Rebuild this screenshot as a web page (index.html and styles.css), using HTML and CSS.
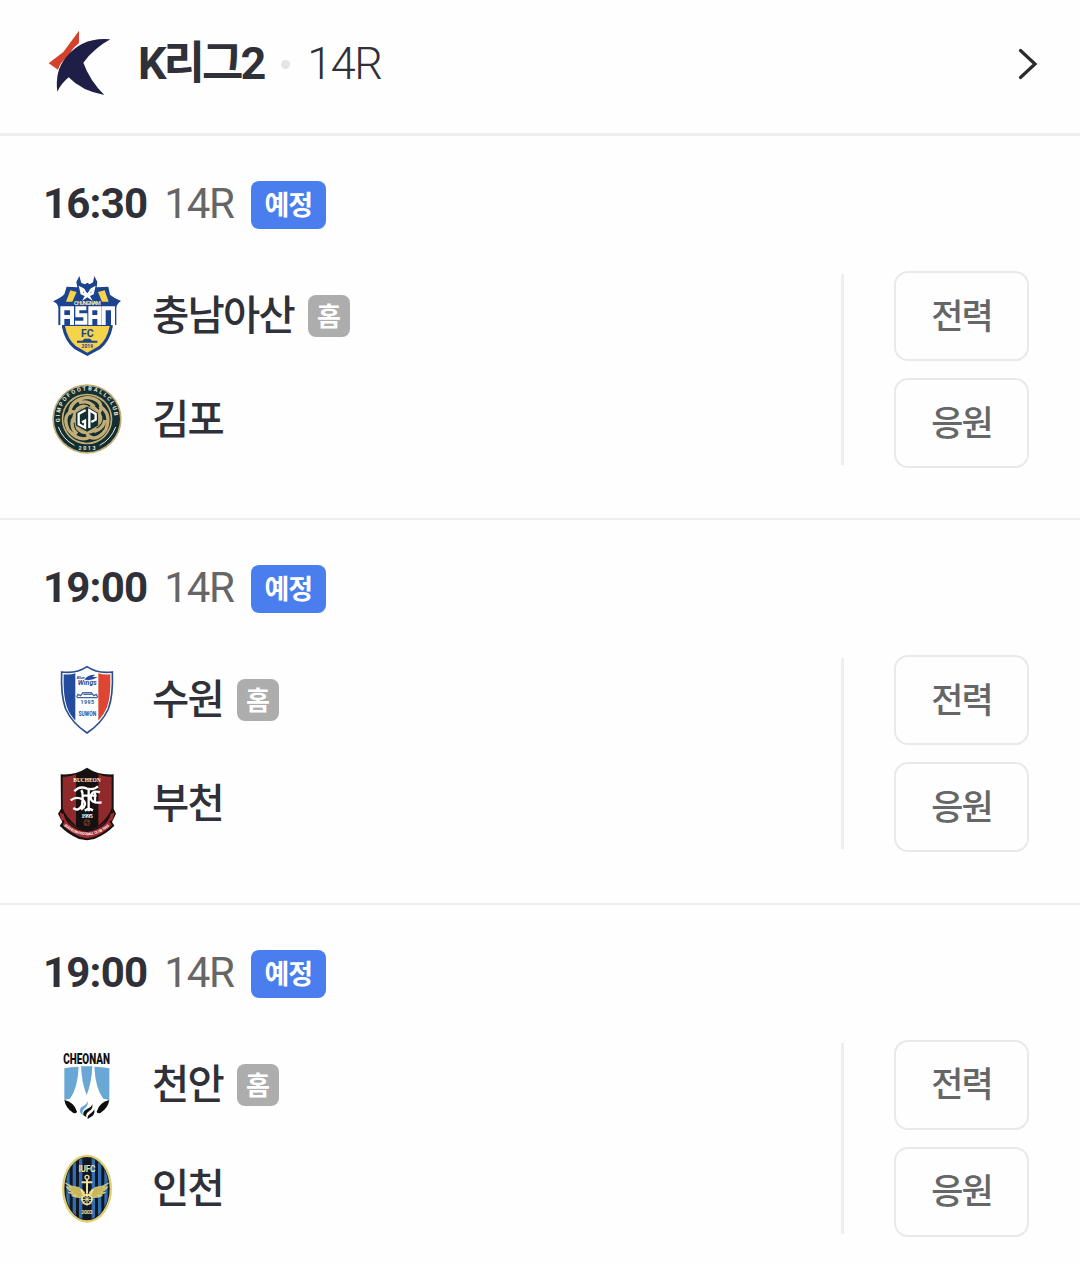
FILE: index.html
```html
<!doctype html>
<html lang="ko">
  <head>
    <meta charset="UTF-8" />
    <meta name="viewport" content="width=device-width, initial-scale=1.0" />
    <title>K리그2 14R</title>
    <link rel="stylesheet" href="styles.css">
  </head>
  <body>

    <header class="league-header">
      <svg class="league-logo" viewBox="-2 -2 192 201">
        <path fill="#d5422c" d="M91 0V37L74 53L56 79Q35 94 28 117L0 98L44 64Z"/>
        <path fill="#1e1e46" d="M185 26Q137 52 104 96Q123 149 167 193Q99 181 60 140Q38 158 26 183Q18 121 51 81Q101 18 185 26Z"/>
      </svg>
      <h1 class="league-name">K리그2</h1>
      <span class="dot"></span>
      <span class="league-round">14R</span>
      <svg class="arrow" viewBox="0 0 20 32">
        <path d="M2.500 2.500L17 16L2.500 29.500"/>
      </svg>
    </header>

    <section class="match">
      <div class="match-status">
        <strong class="time">16:30</strong>
        <span class="round">14R</span>
        <span class="badge">예정</span>
      </div>
      <div class="match-body">
        <div class="teams">
          <div class="team">
            <!-- Chungnam Asan -->
            <svg class="crest" viewBox="0 -12 264 312">
              <path fill="#1c438f" d="M106 24L112 45L123 49L130 44L137 49L147 43L151 24L160 42L158 58L193 56L198 80Q210 90 231 99Q218 108 217 119V171H206V178Q198 219 169 243L130 264L91 243Q62 219 54 178V171H43V119Q41 106 27 100Q51 90 61 79L68 56L100 58L97 42Z"/>
              <path fill="#f5d34b" d="M79 67L98 72L85 101H66ZM182 67L162 72L174 101H194Z"/>
              <path fill="#f5d34b" d="M63 174H197Q190 213 165 234L130 254L95 234Q70 213 63 174Z"/>
              <path fill="#fff" d="M104 53L119 61L130 72L141 61L155 53L149 79L138 84L146 99L130 88L114 99L122 84L110 79Z"/>
              <path fill="#1c438f" d="M124 54L130 61L136 54V68L130 76L124 68ZM117 70L121 74L119 76ZM143 70L139 74L141 76Z"/>
              <text x="130" y="112" class="crest-text" fill="#f3e8b0" font-size="17" textLength="80">CHUNGNAM</text>
              <path fill="none" stroke="#fff" stroke-width="12" d="M55 171V121H84V171M55 147H84M127 121H100V142H124V164H93M139 171V121H166V171M139 147H166M179 171V121H207V171"/>
              <text x="130" y="206" class="crest-text" fill="#1c438f" font-size="33" textLength="38" lengthAdjust="spacingAndGlyphs">FC</text>
              <path fill="#1c438f" d="M99 218H115L121 212H138L144 218H160V224H99Z"/>
              <text x="130" y="241" class="crest-text" fill="#1c438f" font-size="15">2019</text>
            </svg>
            <span class="team-name">충남아산</span>
            <span class="home">홈</span>
          </div>
          <div class="team">
            <!-- Gimpo -->
            <svg class="crest" viewBox="0 -30 264 312">
              <circle cx="129" cy="123" r="104" fill="#c3ad76"/>
              <circle cx="129" cy="123" r="99" fill="#142f32"/>
              <circle cx="129" cy="123" r="76" fill="#c3ad76"/>
              <circle cx="129" cy="123" r="71" fill="#142f32"/>
              <g fill="none" stroke="#c3ad76" stroke-width="10">
                <path id="knot" d="M77 110Q76 66 129 58Q171 62 172 91Q164 117 136 92Q119 78 103 91Q89 104 88 134M105 75Q130 65 151 86"/>
                <use href="#knot" transform="rotate(120 129 123)"/>
                <use href="#knot" transform="rotate(240 129 123)"/>
              </g>
              <path fill="#142f32" stroke="#c3ad76" stroke-width="3" d="M129 84L164 104V143L129 163L94 143V104Z"/>
              <path fill="none" stroke="#fff" stroke-width="7" d="M125 96L104 108V139L123 149V128L114 133M136 150V97L155 108V125L142 132"/>
              <path id="gimpo-ring" fill="none" d="M48 132A82 82 0 1 1 210 132"/>
              <text fill="#eee9d7" font-family="Roboto, sans-serif" font-weight="700" font-size="17" textLength="264"><textPath href="#gimpo-ring">GIMPOFOOTBALLCLUB</textPath></text>
              <text x="129" y="215" class="crest-text" fill="#eee9d7" font-size="16" textLength="51">2013</text>
              <path fill="none" stroke="#eee9d7" stroke-width="3" d="M43 147Q57 184 91 202M215 147Q201 184 167 202"/>
            </svg>
            <span class="team-name">김포</span>
          </div>
        </div>
        <div class="actions">
          <button class="action">전력</button>
          <button class="action">응원</button>
        </div>
      </div>
    </section>

    <section class="match">
      <div class="match-status">
        <strong class="time">19:00</strong>
        <span class="round">14R</span>
        <span class="badge">예정</span>
      </div>
      <div class="match-body">
        <div class="teams">
          <div class="team">
            <!-- Suwon -->
            <svg class="crest" viewBox="0 -30 264 312">
              <path fill="#fff" stroke="#2a4e92" stroke-width="5" d="M53 42Q97 48 129 26Q161 48 205 42Q208 112 193 153Q173 196 129 225Q85 196 65 153Q50 112 53 42Z"/>
              <path fill="#244c9d" d="M59 49Q79 51 94 46V188Q76 169 69 148Q57 115 59 49Z"/>
              <path fill="#df4632" d="M163 46Q179 51 199 49Q201 115 189 148Q181 169 163 188Z"/>
              <path fill="#244c9d" d="M122 64Q129 50 154 50L145 57L161 57L148 64L131 67Z"/>
              <text x="110" y="64" class="crest-text" fill="#244c9d" font-size="13" font-style="italic" textLength="24">Blue</text>
              <text x="130" y="82" class="crest-text" fill="#244c9d" font-size="20" font-style="italic" textLength="57" lengthAdjust="spacingAndGlyphs">Wings</text>
              <path fill="none" stroke="#45679d" stroke-width="4" d="M98 117L102 109L110 113L117 104H142L149 113L157 109L161 117M98 119H161M118 109H143"/>
              <text x="130" y="139" class="crest-text" fill="#31558f" font-size="16" textLength="41">1995</text>
              <text x="130" y="175" class="crest-text" fill="#244c9d" font-size="19" textLength="53" lengthAdjust="spacingAndGlyphs">SUWON</text>
            </svg>
            <span class="team-name">수원</span>
            <span class="home">홈</span>
          </div>
          <div class="team">
            <!-- Bucheon -->
            <svg class="crest" viewBox="0 -24 264 312">
              <path fill="#171011" d="M50 43Q95 46 129 23Q163 46 209 43V146L216 161L204 186L211 197Q187 222 151 237L129 241L105 237Q71 222 47 197L55 186L42 161L51 146Z"/>
              <path fill="#90292b" d="M56 50Q76 52 96 43V197Q66 172 56 145ZM163 43Q182 52 203 50V145Q194 172 163 197Z"/>
              <path fill="#a52b30" d="M47 157L60 163L72 183Q98 208 129 213Q160 208 187 183L199 163L212 157L205 180L196 184L204 196Q176 222 149 231L129 235L110 231Q82 221 56 196L62 183L51 179Z"/>
              <path fill="none" stroke="#171011" stroke-width="4" d="M61 163Q71 204 129 214Q187 204 198 163"/>
              <text x="129" y="65" class="crest-text blackletter" fill="#fff" font-size="20" textLength="82" lengthAdjust="spacingAndGlyphs">BUCHEON</text>
              <path fill="none" stroke="#fff" stroke-width="7" d="M91 94Q107 76 129 86Q149 91 162 79M112 90Q119 101 114 136Q103 156 88 144M80 121Q96 108 115 118Q133 132 111 149M134 88V154M118 107H158M168 97Q146 90 140 108Q137 132 173 127M122 152L134 145L147 151M153 97V129"/>
              <text x="129" y="175" class="crest-text blackletter" fill="#fff" font-size="20" textLength="35">1995</text>
              <circle cx="129" cy="188" r="10" fill="#6c3927"/>
              <path fill="none" stroke="#171011" stroke-width="2" d="M119 188H139M129 178V198M122 181L136 195"/>
              <path id="bucheon-ribbon" fill="none" d="M60 197Q129 255 201 195"/>
              <text fill="#fff" font-family="Roboto, sans-serif" font-weight="700" font-size="11" textLength="150"><textPath href="#bucheon-ribbon">BUCHEON FOOTBALL CLUB 1995</textPath></text>
            </svg>
            <span class="team-name">부천</span>
          </div>
        </div>
        <div class="actions">
          <button class="action">전력</button>
          <button class="action">응원</button>
        </div>
      </div>
    </section>

    <section class="match">
      <div class="match-status">
        <strong class="time">19:00</strong>
        <span class="round">14R</span>
        <span class="badge">예정</span>
      </div>
      <div class="match-body">
        <div class="teams">
          <div class="team">
            <!-- Cheonan -->
            <svg class="crest" viewBox="0 -27 264 312">
              <text x="128" y="65" class="crest-text cheonan-text" fill="#111" font-size="43" textLength="140" lengthAdjust="spacingAndGlyphs">CHEONAN</text>
              <path fill="#69a8d5" d="M61 79Q80 74 104 74Q101 139 78 170L61 174ZM111 73H145Q143 123 128 159Q113 123 111 73ZM151 74Q177 74 196 79V174L178 170Q154 139 151 74Z"/>
              <path fill="#0c0c0c" d="M61 174Q91 181 99 209Q97 215 88 213Q65 199 61 174ZM196 174Q166 181 158 209Q160 215 169 213Q192 199 196 174Z"/>
              <path fill="#69a8d5" d="M131 177Q134 190 121 200Q114 207 116 219Q107 215 108 203Q109 195 122 190Q130 185 131 177Z"/>
              <path fill="#111" d="M145 187Q148 200 135 208Q124 216 127 225L118 220Q116 207 129 201Q142 196 145 187ZM151 202Q154 220 139 226L131 231Q129 221 139 215Q149 209 151 202Z"/>
            </svg>
            <span class="team-name">천안</span>
            <span class="home">홈</span>
          </div>
          <div class="team">
            <!-- Incheon -->
            <svg class="crest" viewBox="0 -33 264 312">
              <clipPath id="incheon-oval"><ellipse cx="129" cy="122" rx="66" ry="93"/></clipPath>
              <ellipse cx="129" cy="122" rx="75" ry="102" fill="#dfcf71"/>
              <ellipse cx="129" cy="122" rx="68" ry="95" fill="#111723"/>
              <path clip-path="url(#incheon-oval)" stroke="#326eae" stroke-width="10" d="M72 20V225M91 20V225M110 20V225M148 20V225M167 20V225M186 20V225"/>
              <text x="129" y="73" class="crest-text" fill="#eee39d" font-size="25" textLength="51">IUFC</text>
              <path fill="#c9b75b" stroke="#eee39d" stroke-width="2" d="M64 105Q86 118 104 118L122 132L114 148Q99 151 83 143L97 142Q81 140 73 133L87 133Q70 126 67 116L81 119ZM194 105Q172 118 154 118L136 132L144 148Q159 151 175 143L161 142Q177 140 185 133L171 133Q188 126 191 116L177 119Z"/>
              <g fill="none" stroke="#eee39d" stroke-width="6">
                <circle cx="129" cy="88" r="6" stroke-width="4"/>
                <path d="M129 94V136M113 103H145M112 124Q116 141 129 143Q142 141 146 124"/>
                <circle cx="129" cy="154" r="15" stroke-width="5"/>
                <path stroke-width="3" d="M110 154H148M129 135V173M116 141L142 167M142 141L116 167"/>
              </g>
              <text x="129" y="199" class="crest-text" fill="#eee39d" font-size="16" textLength="34">2003</text>
            </svg>
            <span class="team-name">인천</span>
          </div>
        </div>
        <div class="actions">
          <button class="action">전력</button>
          <button class="action">응원</button>
        </div>
      </div>
    </section>

  </body>
</html>
```
FILE: styles.css
```css
* {
  box-sizing: border-box;
}
body {
  margin: 0;
  height: 1265px;
  overflow: hidden;
  background-color: #fefefe;
  color: #2f3038;
  font-family: Roboto, "Noto Sans CJK KR", sans-serif;
}

.league-header {
  display: flex;
  align-items: center;
  height: 136px;
  padding: 0 42px 6px 48px;
  border-bottom: 3px solid #eeeeee;
}
.league-logo {
  width: 64px;
  height: 67px;
}
.league-name {
  margin: 0 0 0 26px;
  font-size: 45px;
  line-height: 60px;
  font-weight: 700;
  letter-spacing: -3px;
}
.dot {
  width: 9px;
  height: 9px;
  margin: 1px 17px 0 18px;
  border-radius: 50%;
  background-color: #e3e3e9;
}
.league-round {
  font-size: 45px;
  line-height: 60px;
  font-weight: 300;
  letter-spacing: -1.500px;
}
.arrow {
  width: 20px;
  height: 32px;
  margin-left: auto;
}
.arrow path {
  fill: none;
  stroke: #2a2a30;
  stroke-width: 3.2;
  stroke-linecap: round;
}

.match {
  padding: 45px 51px 46.400px 44px;
  border-bottom: 2px solid #eeeeee;
}
.match:last-child {
  border-bottom: none;
}
.match-status {
  display: flex;
  align-items: center;
  height: 48px;
  margin-bottom: 35px;
}
.time {
  margin-left: -1px;
  padding-bottom: 2px;
  font-size: 42px;
  line-height: 46px;
  font-weight: 700;
  letter-spacing: -0.800px;
}
.round {
  margin-left: 17px;
  padding-bottom: 2px;
  color: #666666;
  font-size: 42px;
  line-height: 46px;
  font-weight: 400;
  letter-spacing: -1.200px;
}
.badge {
  width: 75px;
  height: 48px;
  margin-left: 17px;
  border-radius: 8px;
  background-color: #4a7eee;
  color: white;
  font-size: 27px;
  line-height: 50px;
  font-weight: 700;
  letter-spacing: -1px;
  text-align: center;
}

.match-body {
  display: flex;
  justify-content: space-between;
}
.team {
  display: flex;
  align-items: center;
  height: 104px;
}
.crest {
  width: 88px;
  height: 104px;
}
.crest-text {
  font-family: Roboto, sans-serif;
  font-weight: 700;
  text-anchor: middle;
}
.blackletter {
  font-family: "Liberation Serif", serif;
}
.cheonan-text {
  font-weight: 900;
}
.team-name {
  margin-left: 20px;
  font-size: 40.500px;
  line-height: 60px;
  font-weight: 500;
  letter-spacing: -1.800px;
}
.home {
  width: 42px;
  height: 42px;
  margin-left: 14px;
  border-radius: 8px;
  background-color: #adadad;
  color: white;
  font-size: 26px;
  line-height: 44px;
  font-weight: 700;
  text-align: center;
}

.actions {
  display: flex;
  flex-direction: column;
  gap: 17px;
  position: relative;
  height: 197px;
  margin-top: 7px;
}
.actions::before {
  content: "";
  position: absolute;
  top: 3px;
  left: -53px;
  width: 3px;
  height: 191px;
  background-color: #eeeeee;
}
.action {
  width: 135px;
  height: 90px;
  padding: 3px 0 0;
  border: 2px solid #e9e9e9;
  border-radius: 14px;
  background-color: #fefefe;
  color: #666666;
  font-family: inherit;
  font-size: 35px;
  line-height: 50px;
  font-weight: 500;
  letter-spacing: -2px;
}
```
